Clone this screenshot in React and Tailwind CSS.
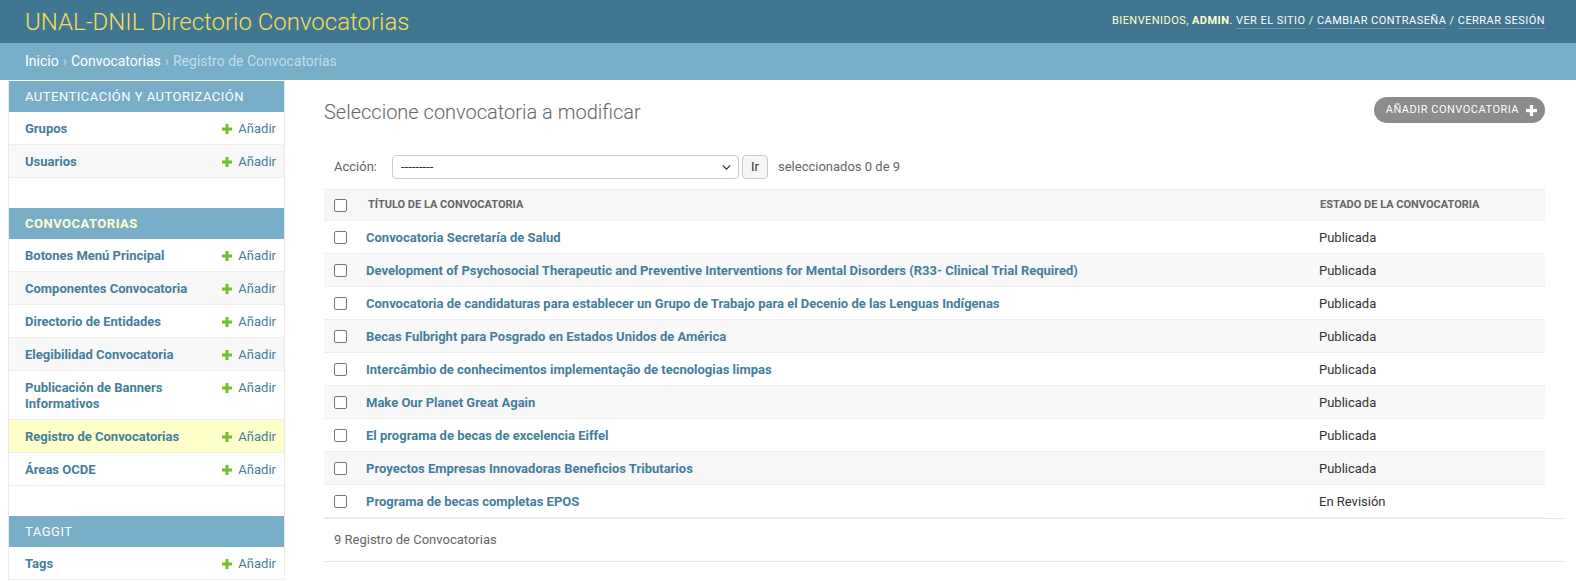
import { ChevronDown } from "lucide-react";

const sections = [
  { name: "Autenticación y autorización", models: ["Grupos", "Usuarios"] },
  {
    name: "Convocatorias",
    current: true,
    models: [
      "Botones Menú Principal",
      "Componentes Convocatoria",
      "Directorio de Entidades",
      "Elegibilidad Convocatoria",
      "Publicación de Banners Informativos",
      "Registro de Convocatorias",
      "Áreas OCDE",
    ],
  },
  { name: "Taggit", models: ["Tags"] },
];

const rows = [
  ["Convocatoria Secretaría de Salud", "Publicada"],
  ["Development of Psychosocial Therapeutic and Preventive Interventions for Mental Disorders (R33- Clinical Trial Required)", "Publicada"],
  ["Convocatoria de candidaturas para establecer un Grupo de Trabajo para el Decenio de las Lenguas Indígenas", "Publicada"],
  ["Becas Fulbright para Posgrado en Estados Unidos de América", "Publicada"],
  ["Intercâmbio de conhecimentos implementação de tecnologias limpas", "Publicada"],
  ["Make Our Planet Great Again", "Publicada"],
  ["El programa de becas de excelencia Eiffel", "Publicada"],
  ["Proyectos Empresas Innovadoras Beneficios Tributarios", "Publicada"],
  ["Programa de becas completas EPOS", "En Revisión"],
];

function Plus({ color = "#70bf2b", size = 10 }) {
  return (
    <svg width={size} height={size} viewBox="0 0 10 10" className="shrink-0">
      <rect x="3.5" y="0" width="3" height="10" fill={color} />
      <rect x="0" y="3.5" width="10" height="3" fill={color} />
    </svg>
  );
}

function Checkbox() {
  return <div className="w-[13px] h-[13px] rounded-[2px] border border-[#767676] bg-white" />;
}

function Sidebar() {
  return (
    <nav className="ml-2 w-[277px] shrink-0 border-x border-[#eaeaea] pt-px">
      {sections.map((s) => (
        <div key={s.name} className="mb-[30px] last:mb-0">
          <div
            className={`h-[31px] flex items-center pl-[16px] bg-[#79aec8] text-[13px] uppercase tracking-[0.5px] ${
              s.current ? "text-[#ffc] font-bold" : "text-white"
            }`}
          >
            {s.name}
          </div>
          {s.models.map((m, i) => {
            const current = m === "Registro de Convocatorias";
            const bg = current ? "bg-[#ffc]" : i % 2 ? "bg-[#f8f8f8]" : "bg-white";
            return (
              <div key={m} className={`flex items-start border-b border-[#eee] ${bg}`}>
                <div className="flex-1 pl-[16px] pr-[8px] pt-[9px] pb-[7px] text-[13px] leading-[16px] font-bold text-[#447e9b]">
                  {m}
                </div>
                <div className="flex items-center gap-[6px] pr-[8px] pt-[9px] pb-[7px] text-[13px] leading-[16px] text-[#447e9b]">
                  <Plus />
                  <span>Añadir</span>
                </div>
              </div>
            );
          })}
        </div>
      ))}
    </nav>
  );
}

export default function App() {
  return (
    <div className="min-h-[581px] bg-white font-['Roboto','Liberation_Sans',sans-serif] text-[#333]">
      <header className="h-[43px] bg-[#417690] flex items-center justify-between pl-[25px] pr-[31px]">
        <h1 className="text-[24px] font-light text-[#f5dd5d] leading-none">UNAL-DNIL Directorio Convocatorias</h1>
        <div className="text-[11px] uppercase tracking-[0.45px] text-[#ffc]">
          Bienvenidos, <strong className="font-bold">admin</strong>.{" "}
          <a className="text-white border-b border-white/25 pb-[1px]">Ver el sitio</a> /{" "}
          <a className="text-white border-b border-white/25 pb-[1px]">Cambiar contraseña</a> /{" "}
          <a className="text-white border-b border-white/25 pb-[1px]">Cerrar sesión</a>
        </div>
      </header>

      <div className="h-[37px] bg-[#79aec8] flex items-center pl-[25px] text-[14px] text-[#c4dce8]">
        <a className="text-white">Inicio</a>
        <span className="mx-[4px]">›</span>
        <a className="text-white">Convocatorias</a>
        <span className="mx-[4px]">›</span>
        <span>Registro de Convocatorias</span>
      </div>

      <div className="flex">
        <Sidebar />

        <main className="flex-1 pl-[39px] pr-[31px] pt-[17px]">
          <div className="h-[26px] flex items-center justify-between">
            <h2 className="text-[20px] font-light text-[#666] mt-[3px]">Seleccione convocatoria a modificar</h2>
            <a className="h-[26px] flex items-center gap-[7px] pl-[12px] pr-[8px] rounded-full bg-[#8c8c8c] text-white text-[11px] uppercase tracking-[0.5px]">
              Añadir convocatoria
              <Plus color="#fff" size={11} />
            </a>
          </div>

          <div className="mt-[32px] h-[24px] flex items-center text-[13px] text-[#666]">
            <span className="ml-[10px]">Acción:</span>
            <div className="ml-[15px] w-[347px] h-[24px] flex items-center justify-between border border-[#ccc] rounded-[4px] pl-[8px] pr-[5px] text-[#333]">
              <span className="text-[13px]">---------</span>
              <ChevronDown size={13} strokeWidth={2.5} className="text-[#333]" />
            </div>
            <div className="ml-[3px] w-[26px] h-[24px] flex items-center justify-center border border-[#ccc] rounded-[4px] bg-[#f6f6f6] text-[#333]">
              Ir
            </div>
            <span className="ml-[10px]">seleccionados 0 de 9</span>
          </div>

          <div className="mt-[10px]">
            <div className="grid grid-cols-[34px_1fr_237px] items-center h-[32px] border-y border-[#eee] bg-[#f6f6f6] text-[11px] font-bold uppercase text-[#666]">
              <div className="pl-[10px]"><Checkbox /></div>
              <div className="pl-[10px]">Título de la convocatoria</div>
              <div className="pl-[12px]">Estado de la convocatoria</div>
            </div>
            {rows.map(([t, s], i) => (
              <div
                key={t}
                className={`grid grid-cols-[34px_1fr_237px] items-center h-[33px] pt-px border-b border-[#eee] text-[13px] ${
                  i % 2 ? "bg-[#f8f8f8]" : "bg-white"
                }`}
              >
                <div className="pl-[10px]"><Checkbox /></div>
                <div className="pl-[8px] font-bold text-[#447e9b] truncate">{t}</div>
                <div className="pl-[11px] text-[#333]">{s}</div>
              </div>
            ))}
            <div className="mr-[-20px] h-[44px] flex items-center pl-[10px] border-y border-[#e5e5e5] text-[13px] text-[#666]">
              9 Registro de Convocatorias
            </div>
          </div>
        </main>
      </div>
    </div>
  );
}
